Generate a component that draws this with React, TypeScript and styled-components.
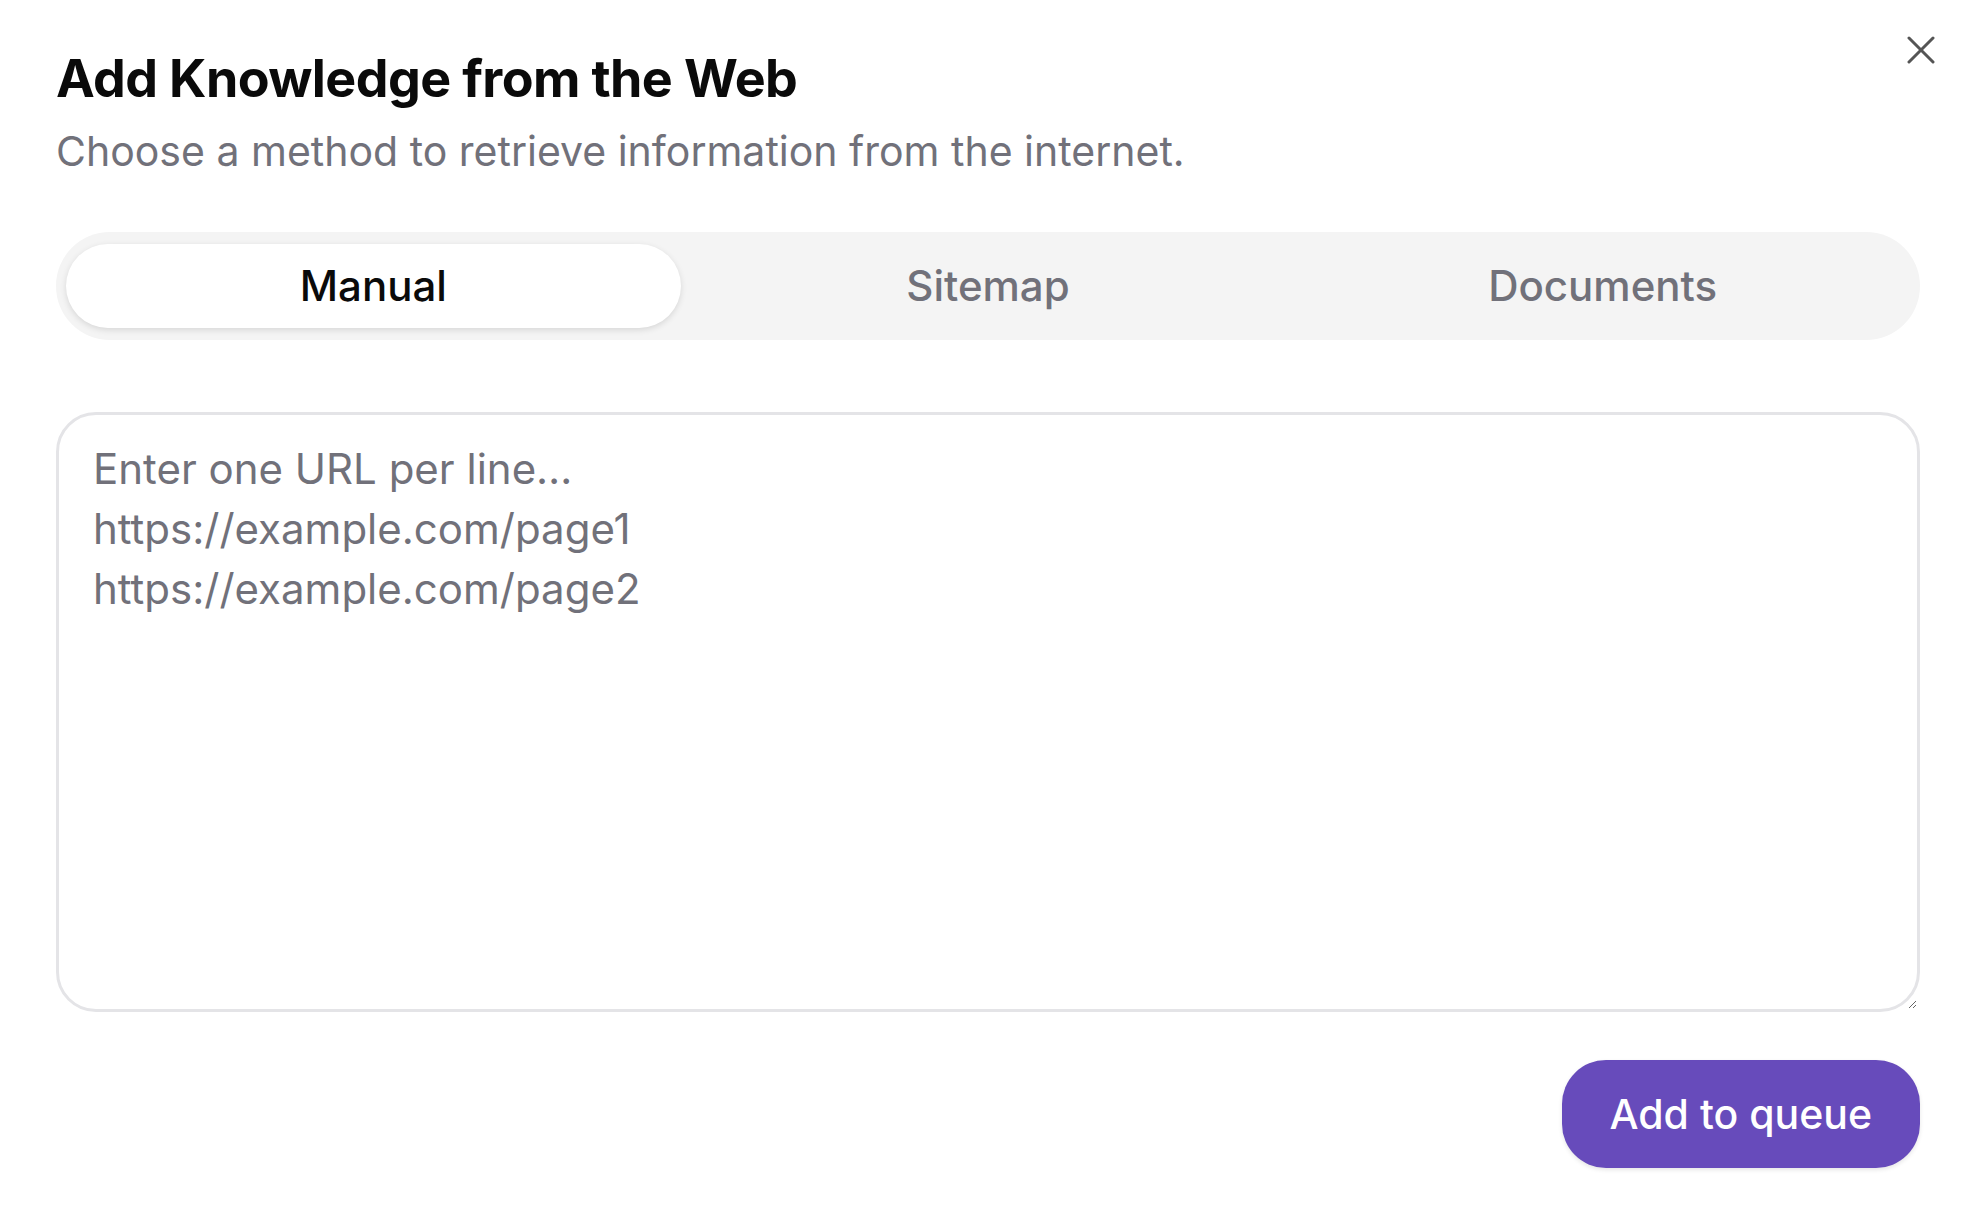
import React, { useState } from "react"
import styled, { createGlobalStyle } from "styled-components"

const GlobalStyle = createGlobalStyle`
  html, body {
    margin: 0;
    padding: 0;
    background: #ffffff;
  }
  body {
    font-family: Inter, "Noto Sans", "Liberation Sans", sans-serif;
    -webkit-font-smoothing: antialiased;
  }
  * {
    box-sizing: border-box;
  }
`

const TABS = ["Manual", "Sitemap", "Documents"]

export default function App() {
  const [active, setActive] = useState("Manual")
  const [urls, setUrls] = useState("")

  return (
    <>
      <GlobalStyle />
      <Dialog>
        <CloseButton aria-label="Close">
          <svg width="28" height="28" viewBox="0 0 28 28" fill="none" stroke="currentColor" strokeWidth="3" strokeLinecap="round">
            <path d="M2 2 L26 26" />
            <path d="M26 2 L2 26" />
          </svg>
        </CloseButton>

        <Header>
          <Title>Add Knowledge from the Web</Title>
          <Subtitle>Choose a method to retrieve information from the internet.</Subtitle>
        </Header>

        <TabList>
          {TABS.map(tab => (
            <Tab key={tab} active={tab === active} onClick={() => setActive(tab)}>
              {tab}
            </Tab>
          ))}
        </TabList>

        <UrlInput
          value={urls}
          onChange={e => setUrls(e.target.value)}
          placeholder={"Enter one URL per line…\nhttps://example.com/page1\nhttps://example.com/page2"}
        />

        <Footer>
          <PrimaryButton>Add to queue</PrimaryButton>
        </Footer>
      </Dialog>
    </>
  )
}

const Dialog = styled.div`
  position: relative;
  display: flex;
  flex-direction: column;
  padding: 48px 46px 48px 56px;
  width: 1966px;
  min-height: 1216px;
`

const CloseButton = styled.button`
  position: absolute;
  top: 36px;
  right: 31px;
  display: flex;
  align-items: center;
  justify-content: center;
  width: 28px;
  height: 28px;
  padding: 0;
  border: none;
  background: transparent;
  color: #555555;
  cursor: pointer;
`

const Header = styled.div`
  display: flex;
  flex-direction: column;
  gap: 15px;
`

const Title = styled.h2`
  margin: 0;
  font-size: 52px;
  line-height: 1.2;
  font-weight: 700;
  letter-spacing: -0.6px;
  color: #0a0a0a;
`

const Subtitle = styled.p`
  margin: 0;
  font-size: 41px;
  line-height: 1.3;
  font-weight: 400;
  color: #71717a;
`

const TabList = styled.div`
  display: grid;
  grid-template-columns: repeat(3, 1fr);
  margin-top: 53px;
  padding: 12px 10px;
  height: 108px;
  border-radius: 54px;
  background: #f4f4f4;
`

const Tab = styled.button<{ active?: boolean }>`
  border: none;
  border-radius: 42px;
  background: ${p => (p.active ? "#ffffff" : "transparent")};
  box-shadow: ${p => (p.active ? "0 2px 6px rgba(0, 0, 0, 0.12)" : "none")};
  color: ${p => (p.active ? "#0a0a0a" : "#71717a")};
  font-family: inherit;
  font-size: 42px;
  font-weight: 500;
  cursor: pointer;
`

const UrlInput = styled.textarea`
  margin-top: 72px;
  height: 600px;
  padding: 24px 34px;
  border: 3px solid #e4e4e7;
  border-radius: 40px;
  font-family: inherit;
  font-size: 42px;
  line-height: 60px;
  color: #0a0a0a;
  resize: vertical;
  outline: none;

  &::placeholder {
    color: #71717a;
  }
`

const Footer = styled.div`
  display: flex;
  justify-content: flex-end;
  margin-top: 48px;
`

const PrimaryButton = styled.button`
  height: 108px;
  padding: 0 48px;
  border: none;
  border-radius: 44px;
  background: #674bbb;
  color: #ffffff;
  font-family: inherit;
  font-size: 41px;
  font-weight: 500;
  box-shadow: 0 2px 4px rgba(0, 0, 0, 0.1);
  cursor: pointer;
`
